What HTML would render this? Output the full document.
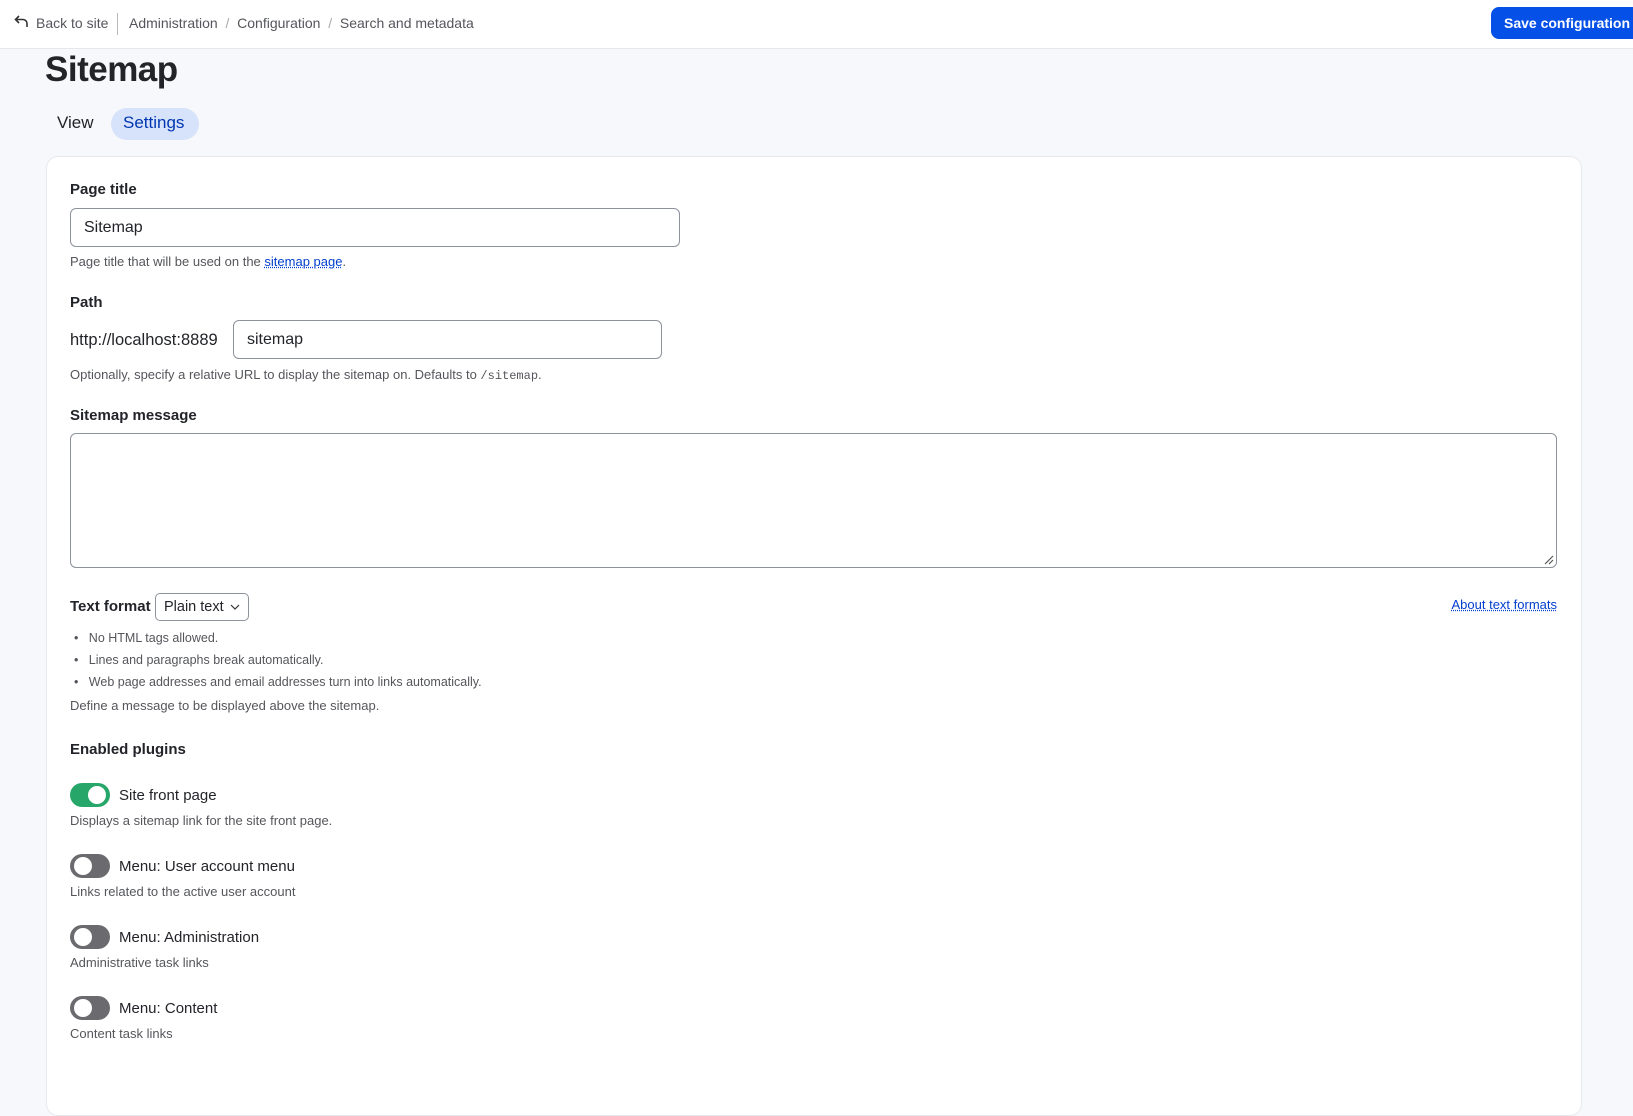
<!DOCTYPE html>
<html><head><meta charset="utf-8"><style>
*{box-sizing:border-box;margin:0;padding:0}
body{width:1633px;height:1050px;overflow:hidden;background:#f7f8fb;font-family:"Liberation Sans",sans-serif;color:#232429;position:relative}
.a{position:absolute;white-space:nowrap}
.hdr{position:absolute;left:0;top:0;width:1633px;height:49px;background:#fff;border-bottom:1px solid #e6e7ea}
.bc{font-size:14px;color:#55565b;top:15px}
.card{position:absolute;left:46px;top:156px;width:1536px;height:960px;background:#fff;border:1px solid #e8e9ee;border-radius:12px}
.lbl{font-size:15px;font-weight:bold;color:#232429}
.help{font-size:13px;color:#55565b}
.inp{position:absolute;border:1px solid #8e929c;border-radius:6px;background:#fff;font-size:16px;padding-left:13px;display:flex;align-items:center}
.tg{position:absolute;left:70px;width:40px;height:24px;border-radius:12px;background:#6b6b6f}
.tg::after{content:"";position:absolute;left:4px;top:3px;width:18px;height:18px;border-radius:50%;background:#fff}
.tg.on{background:#26a769}.tg.on::after{left:18px}
.pl{font-size:15px;left:119px}
a{color:#003ecc;text-decoration:underline dotted}
</style></head><body>
<div class="hdr"></div>
<svg class="a" style="left:14px;top:14px" width="16" height="16" viewBox="0 0 16 16"><path d="M5 2L1.5 5.5 5 9M2 5.5h7a4 4 0 0 1 4 4V13" fill="none" stroke="#333" stroke-width="1.6"/></svg>
<div class="a bc" style="left:36px">Back to site</div>
<div class="a" style="left:117px;top:13px;width:1px;height:22px;background:#bbb"></div>
<div class="a bc" style="left:129px">Administration <span style="color:#aaa">&nbsp;/&nbsp;</span> Configuration <span style="color:#aaa">&nbsp;/&nbsp;</span> Search and metadata</div>
<div class="a" style="left:1491px;top:7px;width:150px;height:32px;background:#0550e6;border-radius:8px;color:#fff;font-weight:bold;font-size:14px;padding:8px 0 0 13px">Save configuration</div>
<div class="a" style="left:45px;top:50px;font-size:35px;font-weight:bold;letter-spacing:-0.5px">Sitemap</div>
<div class="a" style="left:57px;top:113px;font-size:17px">View</div>
<div class="a" style="left:111px;top:108px;width:88px;height:32px;border-radius:16px;background:#d7e3fa;color:#0036b1;font-size:17px;padding:5px 0 0 12px">Settings</div>
<div class="card"></div>
<div class="a lbl" style="left:70px;top:181px">Page title</div>
<div class="inp" style="left:70px;top:208px;width:610px;height:39px">Sitemap</div>
<div class="a help" style="left:70px;top:254px">Page title that will be used on the <a>sitemap page</a>.</div>
<div class="a lbl" style="left:70px;top:294px">Path</div>
<div class="a" style="left:70px;top:331px;font-size:16.5px">http://localhost:8889</div>
<div class="inp" style="left:233px;top:320px;width:429px;height:39px">sitemap</div>
<div class="a help" style="left:70px;top:367px">Optionally, specify a relative URL to display the sitemap on. Defaults to <code style="font-family:'Liberation Mono',monospace;font-size:12px">/sitemap</code>.</div>
<div class="a lbl" style="left:70px;top:407px">Sitemap message</div>
<div class="inp" style="left:70px;top:433px;width:1487px;height:135px"></div>
<svg class="a" style="left:1544px;top:555px" width="10" height="10"><path d="M1 9L9 1M5 9L9 5" stroke="#555" stroke-width="1.2"/></svg>
<div class="a lbl" style="left:70px;top:598px">Text format</div>
<div class="a" style="left:155px;top:593px;width:94px;height:28px;border:1px solid #8e929c;border-radius:5px;font-size:14.5px;padding:5px 0 0 8px">Plain text <svg width="10" height="8" style="margin-left:2px"><path d="M1 2l4 4 4-4" fill="none" stroke="#333" stroke-width="1.2"/></svg></div>
<div class="a help" style="right:76px;top:597px"><a>About text formats</a></div>
<div class="a help" style="left:74px;top:627px;font-size:12.5px;line-height:22px">•&nbsp;&nbsp;&nbsp;No HTML tags allowed.<br>•&nbsp;&nbsp;&nbsp;Lines and paragraphs break automatically.<br>•&nbsp;&nbsp;&nbsp;Web page addresses and email addresses turn into links automatically.</div>
<div class="a help" style="left:70px;top:698px">Define a message to be displayed above the sitemap.</div>
<div class="a lbl" style="left:70px;top:741px">Enabled plugins</div>
<div class="tg on" style="top:783px"></div><div class="a pl" style="top:787px">Site front page</div>
<div class="a help" style="left:70px;top:813px">Displays a sitemap link for the site front page.</div>
<div class="tg" style="top:854px"></div><div class="a pl" style="top:858px">Menu: User account menu</div>
<div class="a help" style="left:70px;top:884px">Links related to the active user account</div>
<div class="tg" style="top:925px"></div><div class="a pl" style="top:929px">Menu: Administration</div>
<div class="a help" style="left:70px;top:955px">Administrative task links</div>
<div class="tg" style="top:996px"></div><div class="a pl" style="top:1000px">Menu: Content</div>
<div class="a help" style="left:70px;top:1026px">Content task links</div>
</body></html>
